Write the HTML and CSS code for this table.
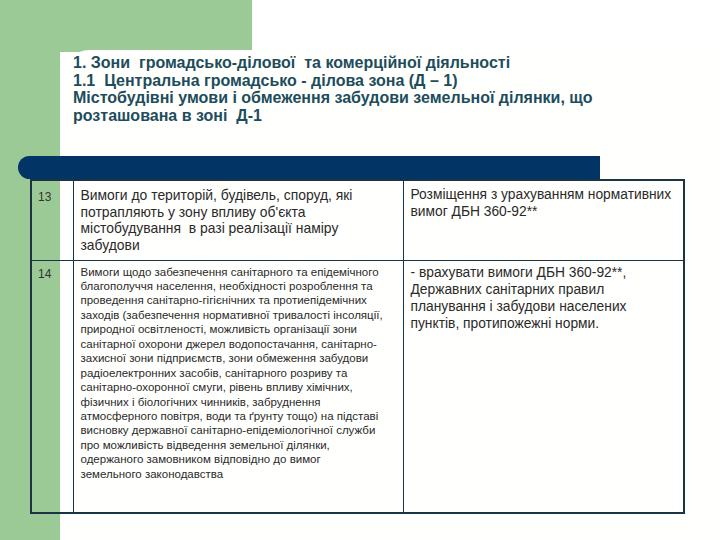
FILE: index.html
```html
<!DOCTYPE html>
<html lang="uk">
<head>
<meta charset="utf-8">
<title>Зони громадсько-ділової діяльності</title>
<link rel="stylesheet" href="styles.css">
</head>
<body>
<div class="slide">
  <div class="panel">
    <h1 class="title">1. Зони&nbsp; громадсько-ділової&nbsp; та комерційної діяльності<br>1.1&nbsp; Центральна громадсько - ділова зона (Д – 1)<br>Містобудівні умови і обмеження забудови земельної ділянки, що<br>розташована в зоні&nbsp; Д-1</h1>
    <div class="bar"></div>
    <table class="grid">
      <tr class="r13">
        <td class="num">13</td>
        <td class="desc">Вимоги до територій, будівель, споруд, які<br>потрапляють у зону впливу об'єкта<br>містобудування&nbsp; в разі реалізації наміру<br>забудови</td>
        <td class="cond">Розміщення з урахуванням нормативних<br>вимог ДБН 360-92**</td>
      </tr>
      <tr class="r14">
        <td class="num">14</td>
        <td class="desc small">Вимоги щодо забезпечення санітарного та епідемічного<br>благополуччя населення, необхідності розроблення та<br>проведення санітарно-гігієнічних та протиепідемічних<br>заходів (забезпечення нормативної тривалості інсоляції,<br>природної освітленості, можливість організації зони<br>санітарної охорони джерел водопостачання, санітарно-<br>захисної зони підприємств, зони обмеження забудови<br>радіоелектронних засобів, санітарного розриву та<br>санітарно-охоронної смуги, рівень впливу хімічних,<br>фізичних і біологічних чинників, забруднення<br>атмосферного повітря, води та ґрунту тощо) на підставі<br>висновку державної санітарно-епідеміологічної служби<br>про можливість відведення земельної ділянки,<br>одержаного замовником відповідно до вимог<br>земельного законодавства</td>
        <td class="cond">- врахувати вимоги ДБН 360-92**,<br>Державних санітарних правил<br>планування і забудови населених<br>пунктів, протипожежні норми.</td>
      </tr>
    </table>
  </div>
</div>
</body>
</html>
```
FILE: styles.css
```css
html, body {
  margin: 0;
  padding: 0;
  background: #ffffff;
}

.slide {
  width: 720px;
  height: 540px;
  overflow: hidden;
  background:
    linear-gradient(#9cca97, #9cca97) 0 0 / 252px 52px no-repeat,
    linear-gradient(#9cca97, #9cca97) 0 0 / 60px 100% no-repeat,
    #ffffff;
  font-family: "Liberation Sans", Arial, sans-serif;
}

.panel {
  margin: 50px 0 0 60px;
  height: 490px;
  background: #fffffd;
  border-top-left-radius: 30px;
  display: flex;
  flex-direction: column;
}

.title {
  margin: 4px 0 0 13px;
  font-size: 16px;
  line-height: 17.5px;
  font-weight: bold;
  color: #1d4d5c;
}

.bar {
  margin: 32px 0 0 -42px;
  width: 582px;
  height: 23px;
  background: #033466;
  border-radius: 12px 0 0 12px;
}

.grid {
  margin-left: -30px;
  width: 655px;
  border-collapse: collapse;
  border: 2px solid #1b3443;
  table-layout: fixed;
  color: #2a2a2a;
}

.grid td {
  box-sizing: border-box;
  border: 1px solid #1b3443;
  vertical-align: top;
  padding: 0;
}

.num {
  width: 42px;
  padding-left: 6px !important;
  font-size: 12px;
  line-height: 16px;
  color: #333;
}

.desc {
  width: 330px;
  padding-left: 7px !important;
  font-size: 13.9px;
  line-height: 16.5px;
}

.desc.small {
  font-size: 11.5px;
  line-height: 14.45px;
}

.cond {
  padding-left: 7px !important;
  font-size: 13.8px;
  line-height: 17px;
}

.r13 td {
  height: 80px;
  padding-top: 6px;
}

.r13 .cond { padding-top: 5px; }
.r13 .num { padding-top: 8px; }

.r14 td {
  height: 253px;
  padding-top: 4px;
}

.r14 .cond { padding-top: 3px; }
.r14 .num { padding-top: 5px; }
```
